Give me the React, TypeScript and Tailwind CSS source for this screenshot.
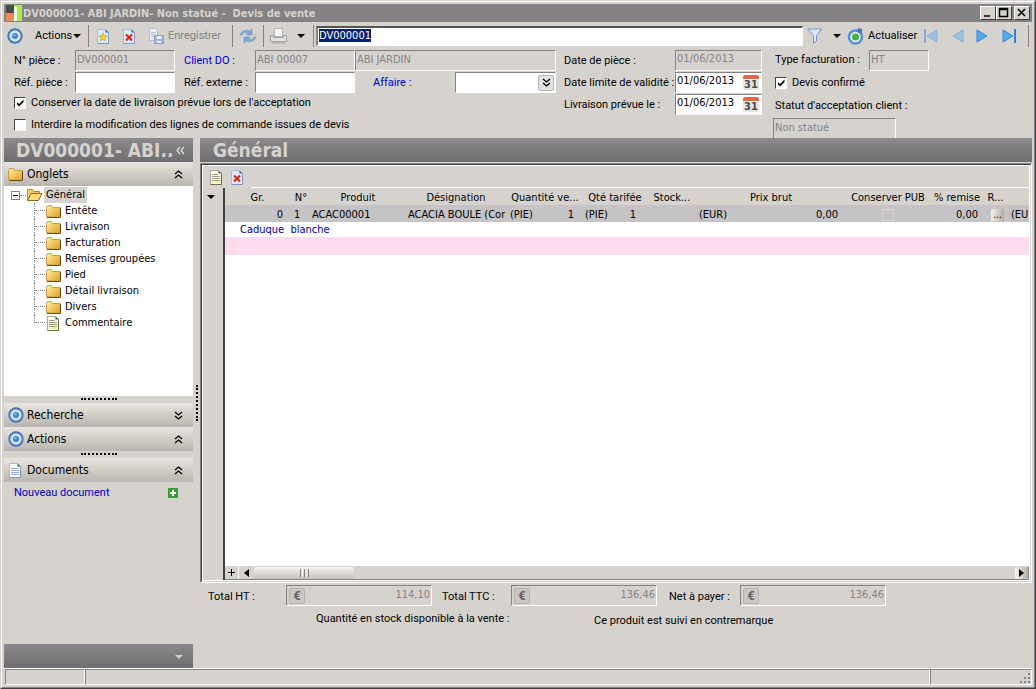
import type { ReactNode } from "react";

const TAHOMA = "font-['DejaVu_Sans_Condensed','DejaVu_Sans',sans-serif]";
const SUNKEN = "border border-t-[#848284] border-l-[#848284] border-r-white border-b-white";

type FieldProps = { id: string; value?: string; disabled?: boolean; className?: string; label?: string };

function Field({ id, value = "", disabled, className = "", label }: FieldProps) {
  return (
    <input
      id={id}
      aria-label={label}
      defaultValue={value}
      disabled={disabled}
      className={`h-[21px] min-w-0 rounded-none bg-white px-px pb-[3px] text-[11px] outline-none disabled:bg-[#d6d3ce] disabled:text-[#848284] ${SUNKEN} ${TAHOMA} ${className}`}
    />
  );
}

function DateField({ id, value }: { id: string; value: string }) {
  return (
    <div className={`flex h-[21px] items-center bg-white pr-[2px] ${SUNKEN}`}>
      <input
        id={id}
        defaultValue={value}
        className={`min-w-0 flex-1 px-px pb-[3px] text-[11px] outline-none ${TAHOMA}`}
      />
      <button
        type="button"
        aria-label="Calendrier"
        className="flex h-[15px] w-4 items-end justify-center rounded-xs border-t-4 border-[#dd6a4e] bg-[#e6e4e4] font-['DejaVu_Sans_Condensed',sans-serif] text-[11px] leading-[10px] font-bold text-[#4a4a4a]"
      >
        31
      </button>
    </div>
  );
}

function Checkbox({ id, checked, children }: { id: string; checked?: boolean; children: ReactNode }) {
  return (
    <div className="flex h-4 items-center gap-[5px]">
      <span className="grid size-3 shrink-0">
        <input
          id={id}
          type="checkbox"
          defaultChecked={checked}
          className="peer col-start-1 row-start-1 size-3 appearance-none rounded-none border border-t-[#404040] border-r-white border-b-white border-l-[#404040] bg-white"
        />
        <svg
          viewBox="0 0 12 12"
          className="pointer-events-none col-start-1 row-start-1 hidden size-3 peer-checked:block"
          aria-hidden="true"
        >
          <path d="M3 5v2.5L5 9.5 9.5 5V2.5L5 7z" fill="#000" />
        </svg>
      </span>
      <label htmlFor={id} className="whitespace-nowrap">
        {children}
      </label>
    </div>
  );
}

function TargetIcon() {
  return (
    <svg width="16" height="16" viewBox="0 0 16 16" aria-hidden="true">
      <circle cx="8" cy="8" r="6.7" fill="#d3e3f6" stroke="#4576bb" strokeWidth="2" />
      <circle cx="8" cy="8" r="3" fill="#3f83d6" />
      <circle cx="7.4" cy="7.3" r="1.2" fill="#7db3ee" />
    </svg>
  );
}

function Caret({ className = "" }: { className?: string }) {
  return (
    <svg width="8" height="4" viewBox="0 0 8 4" className={className} aria-hidden="true">
      <path d="M0 0h8L4 4z" fill="currentColor" />
    </svg>
  );
}

function DocIcon({ kind }: { kind: "star" | "cross" | "lines" | "blue" }) {
  const yellow = kind === "lines";
  return (
    <svg width="14" height="15" viewBox="0 0 14 15" aria-hidden="true">
      <path
        d="M1.500.5h8l3 3v11h-11z"
        fill={yellow ? "#fdfce0" : kind === "blue" ? "#f4f8ff" : "#dde9fb"}
        stroke={yellow ? "#a5a99c" : "#a9bbdb"}
      />
      <path d="M12.500 3.500v11h-11" fill="none" stroke={yellow ? "#6b6f45" : "#7f97c2"} />
      {yellow && <path d="M10 5v8H3l7-3z" fill="#f3ec84" />}
      <path d="M9.500.5v3h3z" fill="#46566f" />
      {kind === "star" && (
        <path
          d="M7 4l1.200 2.700 2.900.3-2.200 1.900.7 2.900L7 10.300l-2.600 1.500.7-2.900L2.900 7l2.900-.3z"
          fill="#f3d41c"
          stroke="#b99a18"
          strokeWidth=".6"
        />
      )}
      {kind === "cross" && <path d="M4 5.500l6 6M10 5.500l-6 6" stroke="#e02414" strokeWidth="2.200" />}
      {yellow && <path d="M3 4.500h6M3 6.500h8M3 8.500h8M3 10.500h8" stroke="#9a9f8e" />}
      {kind === "blue" && <path d="M3 5.500h8M3 7.500h8M3 9.500h8M3 11.500h8" stroke="#8fb2e8" />}
    </svg>
  );
}

function FolderIcon() {
  return (
    <svg width="15" height="13" viewBox="0 0 15 13" aria-hidden="true">
      <defs>
        <linearGradient id="folder" x1="0" y1="0" x2="1" y2="1">
          <stop offset="0" stopColor="#fff0a8" />
          <stop offset="1" stopColor="#dd9f1c" />
        </linearGradient>
      </defs>
      <path d="M.5 2 1.500.5h4l1 2h8v9.500H.5z" fill="url(#folder)" stroke="#c9a050" />
      <path d="M14.500 3v9.500H1" fill="none" stroke="#6b4a16" />
    </svg>
  );
}

function OpenFolderIcon() {
  return (
    <svg width="17" height="14" viewBox="0 0 17 14" aria-hidden="true">
      <path d="M1.500 12V1.500h5l1 2h6v2" fill="#f4cf62" stroke="#b98a3a" />
      <path d="M1.500 12.500l3.500-7h11l-3.500 7z" fill="#fbdc7c" stroke="#96691e" />
    </svg>
  );
}

function Chevrons({ down }: { down?: boolean }) {
  return (
    <svg width="9" height="9" viewBox="0 0 9 9" aria-hidden="true" className={down ? "rotate-180" : ""}>
      <path d="M1 4l3.500-3L8 4M1 8l3.500-3L8 8" fill="none" stroke="#000" strokeWidth="1.300" />
    </svg>
  );
}

function Separator() {
  return <span className="h-[22px] w-px shrink-0 bg-[#848284]" />;
}

function NavIcon({ kind }: { kind: "first" | "prev" | "next" | "last" }) {
  const back = kind === "first" || kind === "prev";
  const bar = kind === "first" || kind === "last";
  return (
    <svg width="16" height="14" viewBox="0 0 16 14" aria-hidden="true" className={back ? "-scale-x-100 opacity-45" : ""}>
      <path d="M2 1l10 6-10 6z" fill="#5aaaf2" stroke="#2f86e0" />
      {bar && <path d="M14 0v14" stroke="#2f7fd6" strokeWidth="2" />}
    </svg>
  );
}

function TitleButton({ label, d }: { label: string; d: string }) {
  return (
    <button
      type="button"
      aria-label={label}
      className="h-[14px] w-4 border border-t-white border-r-[#404040] border-b-[#404040] border-l-white bg-[#d6d3ce]"
    >
      <svg width="14" height="12" viewBox="0 0 14 12" aria-hidden="true">
        <path d={d} fill="none" stroke="#000" strokeWidth="1.500" />
      </svg>
    </button>
  );
}

function TitleBar() {
  return (
    <header className="flex h-[18px] items-center bg-[#848284] px-[2px]">
      <svg width="16" height="16" viewBox="0 0 16 16" aria-hidden="true">
        <rect x="0" y="0" width="8" height="8" fill="#4a4a4a" />
        <rect x="0" y="8" width="8" height="8" fill="#f08a50" />
        <rect x="8" y="0" width="8" height="16" fill="#a5ee52" />
        <rect x="8" y="2" width="3" height="14" fill="#f4ffe8" />
      </svg>
      <h1 className={`flex-1 pl-px text-[11px] leading-none font-bold whitespace-pre text-[#d6d3ce] ${TAHOMA}`}>
        {"DV000001- ABI JARDIN- Non statué -  Devis de vente"}
      </h1>
      <div className="flex">
        <TitleButton label="Réduire" d="M3 9h6" />
        <TitleButton label="Agrandir" d="M2.500 1.500h8v8h-8zM2.500 2.500h8" />
        <span className="w-[2px]" />
        <TitleButton label="Fermer" d="M3 2l7 7M10 2l-7 7" />
      </div>
    </header>
  );
}

function Toolbar() {
  return (
    <div className="flex h-7 items-center px-[3px]">
      <button type="button" className="flex items-center">
        <TargetIcon />
        <span className="w-[50px] pl-3 text-left">Actions</span>
        <Caret />
      </button>
      <span className="w-[7px]" />
      <Separator />
      <button type="button" aria-label="Nouveau" className="ml-[7px]">
        <DocIcon kind="star" />
      </button>
      <button type="button" aria-label="Supprimer" className="ml-3">
        <DocIcon kind="cross" />
      </button>
      <button type="button" disabled className="ml-3 flex w-[84px] items-center gap-1 text-[#848284]">
        <svg width="16" height="16" viewBox="0 0 16 16" aria-hidden="true" className="shrink-0">
          <path d="M1.500.5h6l2 2v10h-8z" fill="#e9edf5" stroke="#b4bfd4" />
          <path d="M3 4.500h5M3 6.500h4M3 8.500h3" stroke="#b4bfd4" />
          <path d="M6.500 7.500h9v8h-9z" fill="#9eb4d8" stroke="#8b9fc4" />
          <path d="M8.500 8h5v3h-5zM9 13h4v2H9z" fill="#edf1f8" />
        </svg>
        Enregistrer
      </button>
      <Separator />
      <button type="button" aria-label="Synchroniser" className="mx-[6px]">
        <svg width="18" height="16" viewBox="0 0 18 16" aria-hidden="true">
          <path d="M1 7c1-4 6-6 10-4l2-2v6H7l2-2C6 4 4 5 3 7z" fill="#84a5d2" stroke="#7492c0" strokeWidth=".6" />
          <path d="M17 9c-1 4-6 6-10 4l-2 2V9h6l-2 2c3 1 5 0 6-2z" fill="#84a5d2" stroke="#7492c0" strokeWidth=".6" />
        </svg>
      </button>
      <Separator />
      <button type="button" aria-label="Imprimer" className="ml-[5px] flex items-center gap-[9px]">
        <svg width="19" height="17" viewBox="0 0 19 17" aria-hidden="true">
          <path d="M5.500.5h8v8h-8z" fill="#f6f6f6" stroke="#b5b5b5" />
          <path d="M1.500 7.500h3v2h10v-2h3v6h-16z" fill="#e2e2e2" stroke="#9c9c9c" />
          <path d="M3 13.500h13v2H3z" fill="#b0b0b0" />
        </svg>
        <Caret />
      </button>
      <span className="w-2" />
      <Separator />
      <input
        aria-label="Recherche de pièce"
        defaultValue="DV000001"
        autoFocus
        onFocus={(e) => e.currentTarget.select()}
        className={`ml-[2px] h-5 min-w-0 flex-1 border-t-2 border-r border-b border-l-2 border-t-[#555] border-r-white border-b-white border-l-[#848284] bg-white px-px pb-[2px] text-[11px] outline-none selection:bg-[#0a246a] selection:text-white ${TAHOMA}`}
      />
      <button type="button" aria-label="Filtrer" className="ml-1 flex items-center gap-[10px]">
        <svg width="16" height="16" viewBox="0 0 16 16" aria-hidden="true">
          <path d="M.8 1h14L9.500 7.500V13L6.500 15V7.500z" fill="#dce9fb" stroke="#6e95d4" />
        </svg>
        <Caret />
      </button>
      <button type="button" className="ml-[6px] flex w-[76px] items-center gap-1">
        <svg width="17" height="17" viewBox="0 0 17 17" aria-hidden="true" className="shrink-0">
          <circle cx="8.500" cy="9" r="6.500" fill="#e8f1f8" stroke="#5a8fd0" strokeWidth="2.500" />
          <path d="M11 0l4 1v5l-5-2z" fill="#3d79c4" />
          <circle cx="8.500" cy="9" r="3.500" fill="#3fb53a" />
        </svg>
        Actualiser
      </button>
      <div className="flex items-center gap-[10px]">
        <button type="button" aria-label="Premier"><NavIcon kind="first" /></button>
        <button type="button" aria-label="Précédent"><NavIcon kind="prev" /></button>
        <button type="button" aria-label="Suivant"><NavIcon kind="next" /></button>
        <button type="button" aria-label="Dernier"><NavIcon kind="last" /></button>
      </div>
      <span className="w-[11px]" />
      <Separator />
    </div>
  );
}

function DocumentForm() {
  return (
    <form className="flex h-[88px] items-start">
      <div className="w-[552px] shrink-0 pl-[10px]">
        <div className="flex h-[22px]">
          <label htmlFor="piece" className="w-[61px] leading-[22px]">N° pièce :</label>
          <Field id="piece" value="DV000001" disabled className="w-[100px]" />
          <label htmlFor="client" className="ml-[9px] w-[71px] leading-[22px] text-[#0000c6]">Client DO :</label>
          <Field id="client" value="ABI 00007" disabled className="w-[100px]" />
          <Field id="clientName" label="Nom du client" value="ABI JARDIN" disabled className="w-[201px]" />
        </div>
        <div className="flex h-[22px]">
          <label htmlFor="refPiece" className="w-[61px] leading-[22px]">Réf. pièce :</label>
          <Field id="refPiece" className="w-[100px]" />
          <label htmlFor="refExt" className="ml-[9px] w-[71px] leading-[22px]">Réf. externe :</label>
          <Field id="refExt" className="w-[100px]" />
          <label htmlFor="affaire" className="ml-[18px] w-[82px] leading-[22px] text-[#0000c6]">Affaire :</label>
          <div className={`flex h-[21px] w-[101px] items-center bg-white pr-px ${SUNKEN}`}>
            <input id="affaire" className="min-w-0 flex-1 outline-none" />
            <button
              type="button"
              aria-label="Choisir une affaire"
              className="flex size-4 items-center justify-center rounded-xs border border-[#b5b5b5] bg-[#e2e2e2]"
            >
              <Chevrons down />
            </button>
          </div>
        </div>
        <div className="flex flex-col gap-[6px] pt-px">
          <Checkbox id="keepDate" checked>Conserver la date de livraison prévue lors de l'acceptation</Checkbox>
          <Checkbox id="lockLines">Interdire la modification des lignes de commande issues de devis</Checkbox>
        </div>
      </div>
      <div className="ml-2 grid w-[198px] shrink-0 auto-rows-[22px] grid-cols-[111px_87px] leading-[22px]">
        <label htmlFor="datePiece">Date de pièce :</label>
        <Field id="datePiece" value="01/06/2013" disabled />
        <label htmlFor="dateLimit">Date limite de validité :</label>
        <DateField id="dateLimit" value="01/06/2013" />
        <label htmlFor="dateLiv">Livraison prévue le :</label>
        <DateField id="dateLiv" value="01/06/2013" />
      </div>
      <div className="ml-[11px] flex-1">
        <div className="flex h-[22px]">
          <label htmlFor="typeFact" className="w-24 pl-[2px] leading-5">Type facturation :</label>
          <Field id="typeFact" value="HT" disabled className="w-[60px]" />
        </div>
        <div className="flex h-[22px] items-center pl-[2px]">
          <Checkbox id="confirmed" checked>Devis confirmé</Checkbox>
        </div>
        <label htmlFor="statut" className="block h-6 pl-[2px] leading-6">Statut d'acceptation client :</label>
        <Field id="statut" value="Non statué" disabled className="h-5 w-[123px]" />
      </div>
    </form>
  );
}

function PanelHeader({ icon, title, down }: { icon: ReactNode; title: string; down?: boolean }) {
  return (
    <button
      type="button"
      className={`flex h-6 w-full shrink-0 items-center bg-linear-to-b from-[#e9e6e1] to-[#b9b5ae] pr-[10px] pl-1 text-[12px] ${TAHOMA}`}
    >
      <span className="flex w-[19px]">{icon}</span>
      <span className="flex-1 text-left">{title}</span>
      <Chevrons down={down} />
    </button>
  );
}

function Grip() {
  return (
    <div className="flex h-[7px] shrink-0 items-start justify-center pt-[2px]">
      <span className="w-9 border-t-2 border-dotted border-black" />
    </div>
  );
}

const TABS = ["Entête", "Livraison", "Facturation", "Remises groupées", "Pied", "Détail livraison", "Divers", "Commentaire"];

function Sidebar() {
  return (
    <aside className="flex w-[189px] shrink-0 flex-col">
      <div className="flex h-6 shrink-0 items-center justify-between bg-linear-to-b from-[#8c8a8c] to-[#6e6c6e] pr-2 pl-3 text-[#d6d3ce]">
        <h2 className={`text-[19px] leading-6 font-bold whitespace-nowrap ${TAHOMA}`}>DV000001- ABI..</h2>
        <button type="button" aria-label="Replier le volet">
          <svg width="9" height="9" viewBox="0 0 9 9" className="-rotate-90" aria-hidden="true">
            <path d="M1 4l3.500-3L8 4M1 8l3.500-3L8 8" fill="none" stroke="#e6e4e0" strokeWidth="1.200" />
          </svg>
        </button>
      </div>
      <PanelHeader icon={<FolderIcon />} title="Onglets" />
      <div className={`h-[210px] shrink-0 bg-white pt-px pl-[7px] ${TAHOMA}`}>
        <div className="flex h-4 items-center">
          <button
            type="button"
            aria-label="Réduire Général"
            className="flex size-[9px] items-center justify-center border border-[#848284]"
          >
            <span className="h-px w-[5px] bg-black" />
          </button>
          <span className="w-[6px] border-t border-dotted border-[#848284]" />
          <OpenFolderIcon />
          <span className="ml-px bg-[#d6d3ce] px-[2px] leading-4">Général</span>
        </div>
        <ul className="pl-[23px]">
          {TABS.map((tab, i) => (
            <li key={tab} className="flex h-4">
              <span className={`w-0 border-l border-dotted border-[#848284] ${i === TABS.length - 1 ? "h-2" : "h-4"}`} />
              <span className="h-2 w-[10px] border-b border-dotted border-[#848284]" />
              <a href="#" className="flex items-center gap-1 leading-4">
                <span className="flex w-4 justify-center">
                  {i === TABS.length - 1 ? <DocIcon kind="lines" /> : <FolderIcon />}
                </span>
                {tab}
              </a>
            </li>
          ))}
        </ul>
      </div>
      <Grip />
      <PanelHeader icon={<TargetIcon />} title="Recherche" down />
      <PanelHeader icon={<TargetIcon />} title="Actions" />
      <Grip />
      <PanelHeader icon={<DocIcon kind="blue" />} title="Documents" />
      <div className="flex h-[22px] items-center justify-between pr-[15px] pl-[10px]">
        <a href="#" className="text-[#0000c6]">Nouveau document</a>
        <svg width="10" height="10" viewBox="0 0 10 10" aria-hidden="true">
          <rect width="10" height="10" rx="1" fill="#3a9a34" />
          <path d="M5 2v6M2 5h6" stroke="#fff" strokeWidth="2" />
        </svg>
      </div>
      <div className="flex-1" />
      <div className="flex h-6 shrink-0 items-center justify-end bg-linear-to-b from-[#8c8a8c] to-[#6e6c6e] pt-px pr-[10px] text-[#d6d3ce]">
        <Caret />
      </div>
    </aside>
  );
}

function LinesTable() {
  return (
    <table className={`w-full table-fixed border-collapse leading-[15px] whitespace-nowrap ${TAHOMA}`}>
      <colgroup>
        <col className="w-[65px]" />
        <col className="w-[22px]" />
        <col className="w-[92px]" />
        <col className="w-[104px]" />
        <col className="w-[74px]" />
        <col className="w-[66px]" />
        <col className="w-[48px]" />
        <col className="w-[150px]" />
        <col className="w-[84px]" />
        <col className="w-[54px]" />
        <col className="w-[27px]" />
        <col />
      </colgroup>
      <thead>
        <tr className="h-[17px] bg-[#d6d3ce] [&>th]:p-0 [&>th]:pt-[2px] [&>th]:font-normal">
          <th>Gr.</th>
          <th>N°</th>
          <th>Produit</th>
          <th>Désignation</th>
          <th>Quantité ve...</th>
          <th>Qté tarifée</th>
          <th>Stock...</th>
          <th>Prix brut</th>
          <th>Conserver PUB</th>
          <th>% remise</th>
          <th><div className="pr-1">R...</div></th>
          <th />
        </tr>
      </thead>
      <tbody>
        <tr className="h-[17px] bg-[#c6c3c6] [&>td]:overflow-hidden [&>td]:p-0 [&>td]:pt-[2px]">
          <td><div className="pr-[7px] text-right">0</div></td>
          <td><div className="pl-1">1</div></td>
          <td>ACAC00001</td>
          <td><div className="mr-[3px] ml-1 overflow-hidden">ACACIA BOULE (Cor</div></td>
          <td><div className="flex justify-between pr-2 pl-[2px]"><span>(PIE)</span><span>1</span></div></td>
          <td><div className="flex justify-between pr-3 pl-[3px]"><span>(PIE)</span><span>1</span></div></td>
          <td />
          <td><div className="flex justify-between pr-2 pl-[3px]"><span>(EUR)</span><span>0,00</span></div></td>
          <td>
            <input
              type="checkbox"
              disabled
              aria-label="Conserver PUB"
              className="mx-auto block size-3 appearance-none border border-[#d6d3ce]"
            />
          </td>
          <td><div className="pr-[6px] text-right">0,00</div></td>
          <td>
            <button
              type="button"
              className="mx-auto block h-3 w-[13px] bg-linear-to-r from-[#f4f2ee] to-[#b0ada6] text-[10px] leading-[10px]"
            >
              ...
            </button>
          </td>
          <td>(EU</td>
        </tr>
        <tr className="h-[15px] bg-white">
          <td colSpan={12} className="p-0 pl-[15px] whitespace-pre text-[#000084]">
            <div className="pt-px leading-[14px]">{"Caduque  blanche"}</div>
          </td>
        </tr>
        <tr className="h-[18px] bg-[#ffdbef]">
          <td colSpan={12} className="p-0" />
        </tr>
      </tbody>
    </table>
  );
}

function ScrollBar() {
  return (
    <div className="flex h-[14px] items-center border-b border-[#848284] bg-[#d6d3ce]">
      <button type="button" aria-label="Ajouter une ligne" className="flex h-[13px] w-[14px] items-center justify-center border-r border-white">
        <svg width="7" height="7" viewBox="0 0 7 7" aria-hidden="true">
          <path d="M3.500 0v7M0 3.500h7" stroke="#000" />
        </svg>
      </button>
      <button type="button" aria-label="Défiler à gauche" className="flex h-[13px] w-[14px] items-center justify-center">
        <svg width="5" height="8" viewBox="0 0 5 8" aria-hidden="true"><path d="M5 0v8L0 4z" /></svg>
      </button>
      <div className="ml-px flex h-3 w-[100px] items-center justify-center gap-px rounded-xs bg-linear-to-b from-[#f6f4f0] to-[#c4c1ba]">
        <span className="h-2 w-px bg-[#848284]" />
        <span className="h-2 w-px bg-[#f6f4f0]" />
        <span className="h-2 w-px bg-[#848284]" />
        <span className="h-2 w-px bg-[#f6f4f0]" />
        <span className="h-2 w-px bg-[#848284]" />
      </div>
      <div className="flex-1" />
      <button
        type="button"
        aria-label="Défiler à droite"
        className="flex h-3 w-[14px] items-center justify-center border-r border-[#848284] bg-linear-to-r from-[#f6f4f0] to-[#b4b1aa]"
      >
        <svg width="5" height="8" viewBox="0 0 5 8" aria-hidden="true"><path d="M0 0v8l5-4z" /></svg>
      </button>
    </div>
  );
}

function Total({ id, label, value, className }: { id: string; label: string; value: string; className: string }) {
  return (
    <div className="flex h-[21px]">
      <label htmlFor={id} className={`leading-6 ${className}`}>{label}</label>
      <div className={`flex w-[146px] items-center pl-[2px] ${SUNKEN}`}>
        <span className="flex size-4 items-center justify-center rounded-xs border border-[#b5b2ad] bg-[#cbc8c3] text-[13px] leading-none font-bold text-[#636163]">
          €
        </span>
        <input
          id={id}
          disabled
          defaultValue={value}
          className={`min-w-0 flex-1 pr-px pb-[2px] text-right text-[11px] text-[#848284] ${TAHOMA}`}
        />
      </div>
    </div>
  );
}

function MainPanel() {
  return (
    <main className="flex min-w-0 flex-1 flex-col">
      <h2
        className={`h-6 shrink-0 bg-linear-to-b from-[#8c8a8c] to-[#6e6c6e] pl-[13px] text-[19px] leading-6 font-bold text-[#d6d3ce] ${TAHOMA}`}
      >
        Général
      </h2>
      <div className="mt-px flex h-[420px] flex-col border border-t-[#848284] border-r-white border-b-white border-l-[#848284]">
        <div className="flex min-h-0 flex-1 flex-col border border-t-[#404040] border-r-[#d6d3ce] border-b-[#d6d3ce] border-l-[#404040]">
          <div className="flex min-h-0 flex-1 flex-col border border-white">
            <div className="flex h-[22px] shrink-0 items-center gap-[7px] pl-[6px]">
              <button type="button" aria-label="Nouvelle ligne"><DocIcon kind="lines" /></button>
              <button type="button" aria-label="Supprimer la ligne"><DocIcon kind="cross" /></button>
              <span className="h-full flex-1 border-b border-white" />
            </div>
            <div className="flex min-h-0 flex-1">
              <div className="flex w-[22px] shrink-0 justify-center border-r-2 border-[#404040] pt-[7px] pr-1">
                <Caret />
              </div>
              <div className="flex min-w-0 flex-1 flex-col bg-white">
                <LinesTable />
                <div className="flex-1" />
                <ScrollBar />
              </div>
            </div>
          </div>
        </div>
      </div>
      <div className="flex pt-[2px]">
        <Total id="totalHt" label="Total HT :" value="114,10" className="w-[86px] pl-2" />
        <Total id="totalTtc" label="Total TTC :" value="136,46" className="w-[79px] pl-[10px]" />
        <Total id="net" label="Net à payer :" value="136,46" className="w-[83px] pl-3" />
      </div>
      <div className="flex pt-1 pl-[116px] leading-[18px]">
        <p className="w-[278px]">Quantité en stock disponible à la vente :</p>
        <p className="pt-[2px]">Ce produit est suivi en contremarque</p>
      </div>
    </main>
  );
}

function StatusBar() {
  return (
    <footer className="flex h-[17px] shrink-0 border-t border-white">
      <span className={`ml-px w-20 ${SUNKEN}`} />
      <span className={`flex-1 ${SUNKEN}`} />
      <span className={`flex w-[102px] items-end justify-end ${SUNKEN}`}>
        <svg width="12" height="12" viewBox="0 0 12 12" aria-hidden="true">
          <path d="M9 1h2v2H9zM5 5h2v2H5zM9 5h2v2H9zM1 9h2v2H1zM5 9h2v2H5zM9 9h2v2H9z" fill="#848284" />
        </svg>
      </span>
    </footer>
  );
}

export default function App() {
  return (
    <div className="flex min-h-screen flex-col border border-t-[#d6d3ce] border-r-[#404040] border-b-[#404040] border-l-[#d6d3ce] bg-[#d6d3ce] font-[Roboto,'Liberation_Sans',sans-serif] text-[11px] leading-4 text-black">
      <div className="flex flex-1 flex-col border border-t-white border-r-[#848284] border-b-[#848284] border-l-white p-[2px]">
        <TitleBar />
        <Toolbar />
        <DocumentForm />
        <div className="flex flex-1">
          <Sidebar />
          <div className="flex w-[7px] shrink-0 items-center justify-center">
            <span className="h-9 border-l-2 border-dotted border-black" />
          </div>
          <MainPanel />
        </div>
        <StatusBar />
      </div>
    </div>
  );
}
